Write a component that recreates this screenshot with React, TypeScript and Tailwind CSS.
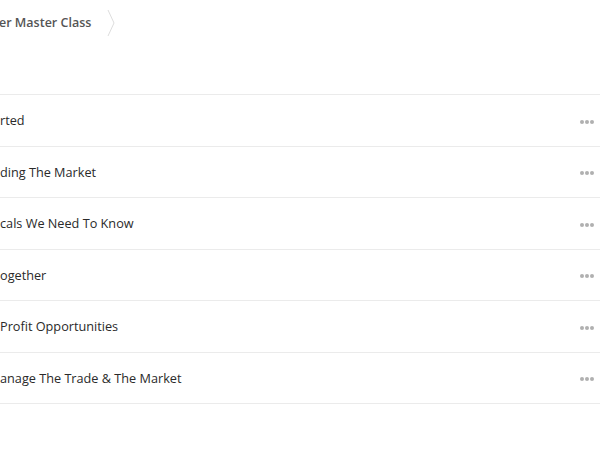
const lessons = [
  'rted',
  'ding The Market',
  'cals We Need To Know',
  'ogether',
  'Profit Opportunities',
  'anage The Trade & The Market',
];

function Dots() {
  return (
    <span className="mt-[3px] flex items-center gap-[1px]">
      <span className="h-[4px] w-[4px] rounded-full bg-[#b0b0b0]" />
      <span className="h-[4px] w-[4px] rounded-full bg-[#b0b0b0]" />
      <span className="h-[4px] w-[4px] rounded-full bg-[#b0b0b0]" />
    </span>
  );
}

export default function App() {
  return (
    <div className="h-[455px] w-[600px] overflow-hidden bg-white font-['Open_Sans',sans-serif] text-[#2a2a2a]">
      {/* breadcrumb */}
      <div className="flex h-[45px] items-center pt-[1px]">
        <span className="-ml-[1px] text-[12.5px] font-semibold text-[#555]">er Master Class</span>
        <svg className="ml-[16px]" width="8" height="26" viewBox="0 0 8 26">
          <path d="M1 0 L7 13 L1 26" fill="none" stroke="#ddd" strokeWidth="1" />
        </svg>
      </div>

      <div className="mt-[49px] border-t border-[#ebebeb]">
        {lessons.map((l) => (
          <div
            key={l}
            className="flex h-[51.5px] items-center justify-between border-b border-[#ebebeb] pr-[6px]"
          >
            <span className="pt-[1px] text-[12.7px] whitespace-pre">{l}</span>
            <Dots />
          </div>
        ))}
      </div>
    </div>
  );
}
